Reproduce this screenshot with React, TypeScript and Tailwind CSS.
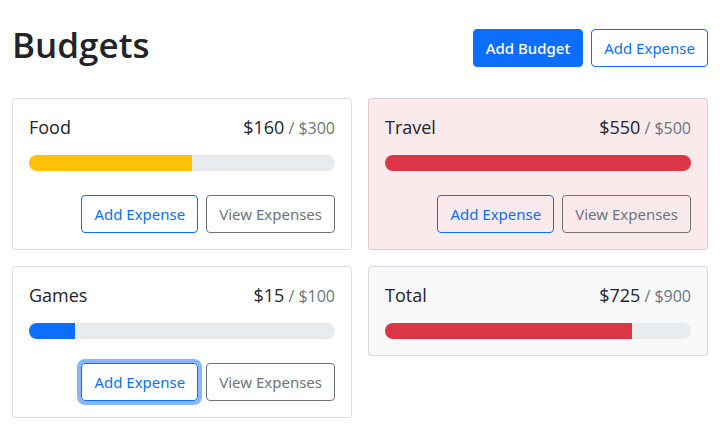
import type { ButtonHTMLAttributes } from "react";
import clsx from "clsx";

type Variant = "primary" | "outline-primary" | "outline-secondary";

const variants: Record<Variant, string> = {
  primary: "border-[#0d6efd] bg-[#0d6efd] font-medium text-white",
  "outline-primary": "border-[#0d6efd] text-[#0d6efd]",
  "outline-secondary": "border-[#6c757d] text-[#6c757d]",
};

function Button({
  variant,
  className,
  ...props
}: ButtonHTMLAttributes<HTMLButtonElement> & { variant: Variant }) {
  return (
    <button
      type="button"
      className={clsx(
        "rounded border px-3 py-1.5 font-['Segoe_UI','Noto_Sans',sans-serif] text-[15px] leading-6 whitespace-nowrap outline-none",
        variants[variant],
        className,
      )}
      {...props}
    />
  );
}

function barColor(ratio: number) {
  if (ratio < 0.5) return "bg-[#0d6efd]";
  if (ratio < 0.75) return "bg-[#ffc107]";
  return "bg-[#dc3545]";
}

interface Budget {
  name: string;
  amount: number;
  max: number;
  isTotal?: boolean;
  isActive?: boolean;
}

function BudgetCard({ name, amount, max, isTotal, isActive }: Budget) {
  const ratio = Math.min(amount / max, 1);
  return (
    <section
      className={clsx(
        "rounded border border-black/[0.125] p-4",
        amount > max ? "bg-[#dc3545]/10" : isTotal ? "bg-[#f8f9fa]" : "bg-white",
      )}
    >
      <div className="mb-4 flex items-baseline justify-between text-lg leading-6">
        <h2>{name}</h2>
        <div>
          ${amount}
          <span className="ml-1 text-base leading-none text-[#6c757d]">/ ${max}</span>
        </div>
      </div>
      <div
        role="progressbar"
        aria-label={name}
        aria-valuemin={0}
        aria-valuemax={max}
        aria-valuenow={amount}
        className="h-4 overflow-hidden rounded-full bg-[#e9ecef]"
      >
        <div className={clsx("h-full", barColor(ratio))} style={{ width: `${ratio * 100}%` }} />
      </div>
      {!isTotal && (
        <div className="mt-6 flex justify-end gap-2">
          <Button
            variant="outline-primary"
            className={clsx("focus:ring-4 focus:ring-[#0d6efd]/50", isActive && "ring-4 ring-[#0d6efd]/50")}
          >
            Add Expense
          </Button>
          <Button variant="outline-secondary">View Expenses</Button>
        </div>
      )}
    </section>
  );
}

const budgets: Budget[] = [
  { name: "Food", amount: 160, max: 300 },
  { name: "Travel", amount: 550, max: 500 },
  { name: "Games", amount: 15, max: 100, isActive: true },
  { name: "Total", amount: 725, max: 900, isTotal: true },
];

export default function App() {
  return (
    <main className="bg-white px-3 pt-[22px] pb-6 font-['Segoe_UI','Open_Sans','Noto_Sans',sans-serif] text-[#212529]">
      <header className="mb-6 flex items-center gap-2">
        <h1 className="mr-auto mb-1.5 text-[35px] leading-[46px] font-semibold">Budgets</h1>
        <Button variant="primary">Add Budget</Button>
        <Button variant="outline-primary">Add Expense</Button>
      </header>
      <div className="grid grid-cols-[repeat(auto-fill,minmax(300px,1fr))] items-start gap-4">
        {budgets.map((budget) => (
          <BudgetCard key={budget.name} {...budget} />
        ))}
      </div>
    </main>
  );
}
